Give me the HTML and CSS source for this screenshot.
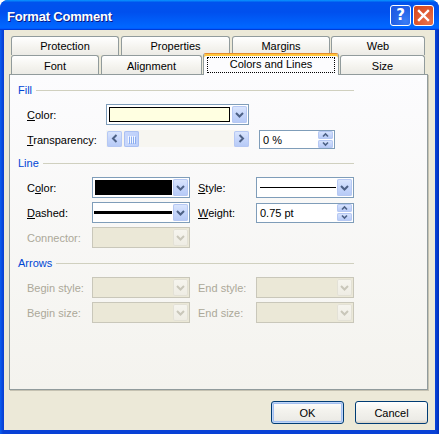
FILE: index.html
```html
<!DOCTYPE html>
<html>
<head>
<meta charset="utf-8">
<title>Format Comment</title>
<link rel="stylesheet" href="styles.css">
</head>
<body>
<div class="window">
  <div class="titlebar">
    <span class="title">Format Comment</span>
    <div class="tb-buttons">
      <div class="tb-btn help">?</div>
      <div class="tb-btn close">
        <svg width="19" height="19" viewBox="0 0 19 19"><path d="M5 5 L14 14 M14 5 L5 14" stroke="#fff" stroke-width="2.4" stroke-linecap="square" fill="none"/></svg>
      </div>
    </div>
  </div>
  <div class="client">
    <div class="tabs">
      <div class="tabrow back">
        <div class="tab t-prot">Protection</div>
        <div class="tab t-props">Properties</div>
        <div class="tab t-marg">Margins</div>
        <div class="tab t-web">Web</div>
      </div>
      <div class="tabrow front">
        <div class="tab t-font">Font</div>
        <div class="tab t-align">Alignment</div>
        <div class="tab t-colors selected"><span class="focus">Colors and Lines</span></div>
        <div class="tab t-size">Size</div>
      </div>
    </div>
    <div class="panel">
      <section class="group">
        <div class="group-head"><span class="gh-text">Fill</span><i class="rule"></i></div>
        <div class="grid grid-fill">
          <span class="lbl"><u>C</u>olor:</span>
          <div class="combo">
            <div class="field"><div class="swatch yellow"></div></div>
            <div class="dd"><svg width="15" height="17" viewBox="0 0 15 17"><path d="M4 7 L7.5 10.5 L11 7" stroke="#4d6185" stroke-width="2" fill="none"/></svg></div>
          </div>
          <span class="lbl"><u>T</u>ransparency:</span>
          <div class="hscroll">
            <div class="sbtn"><svg width="15" height="17" viewBox="0 0 15 17"><path d="M9.5 5 L6 8.5 L9.5 12" stroke="#4d6185" stroke-width="2" fill="none"/></svg></div>
            <div class="thumb"><svg width="15" height="17" viewBox="0 0 15 17"><path d="M4.5 5 V12 M6.5 5 V12 M8.5 5 V12 M10.5 5 V12" stroke="#f4f8ff" stroke-width="1" fill="none"/><path d="M5.5 6 V13 M7.5 6 V13 M9.5 6 V13 M11.5 6 V13" stroke="#8caef0" stroke-width="1" fill="none"/></svg></div>
            <div class="track"></div>
            <div class="sbtn"><svg width="15" height="17" viewBox="0 0 15 17"><path d="M5.5 5 L9 8.5 L5.5 12" stroke="#4d6185" stroke-width="2" fill="none"/></svg></div>
          </div>
          <div class="spin s-trans">
            <span class="spin-val">0 %</span>
            <div class="spinbtns">
              <div class="spb"><svg width="15" height="8" viewBox="0 0 15 8"><path d="M5 5.5 L7.5 3 L10 5.5" stroke="#4d6185" stroke-width="1.6" fill="none"/></svg></div>
              <div class="spb"><svg width="15" height="8" viewBox="0 0 15 8"><path d="M5 2.5 L7.5 5 L10 2.5" stroke="#4d6185" stroke-width="1.6" fill="none"/></svg></div>
            </div>
          </div>
        </div>
      </section>

      <section class="group g-line">
        <div class="group-head"><span class="gh-text">Line</span><i class="rule"></i></div>
        <div class="grid grid-two">
          <span class="lbl">C<u>o</u>lor:</span>
          <div class="combo">
            <div class="field"><div class="swatch black"></div></div>
            <div class="dd"><svg width="15" height="17" viewBox="0 0 15 17"><path d="M4 7 L7.5 10.5 L11 7" stroke="#4d6185" stroke-width="2" fill="none"/></svg></div>
          </div>
          <span class="lbl c4"><u>S</u>tyle:</span>
          <div class="combo">
            <div class="field"><div class="linesample thin"></div></div>
            <div class="dd"><svg width="15" height="17" viewBox="0 0 15 17"><path d="M4 7 L7.5 10.5 L11 7" stroke="#4d6185" stroke-width="2" fill="none"/></svg></div>
          </div>
          <span class="lbl"><u>D</u>ashed:</span>
          <div class="combo">
            <div class="field"><div class="linesample thick"></div></div>
            <div class="dd"><svg width="15" height="17" viewBox="0 0 15 17"><path d="M4 7 L7.5 10.5 L11 7" stroke="#4d6185" stroke-width="2" fill="none"/></svg></div>
          </div>
          <span class="lbl c4"><u>W</u>eight:</span>
          <div class="spin">
            <span class="spin-val">0.75 pt</span>
            <div class="spinbtns">
              <div class="spb"><svg width="15" height="8" viewBox="0 0 15 8"><path d="M5 5.5 L7.5 3 L10 5.5" stroke="#4d6185" stroke-width="1.6" fill="none"/></svg></div>
              <div class="spb"><svg width="15" height="8" viewBox="0 0 15 8"><path d="M5 2.5 L7.5 5 L10 2.5" stroke="#4d6185" stroke-width="1.6" fill="none"/></svg></div>
            </div>
          </div>
          <span class="lbl disabled">Connector:</span>
          <div class="combo disabled">
            <div class="field"></div>
            <div class="dd"><svg width="15" height="17" viewBox="0 0 15 17"><path d="M4 7 L7.5 10.5 L11 7" stroke="#c9c7ba" stroke-width="2" fill="none"/></svg></div>
          </div>
        </div>
      </section>

      <section class="group g-arrows">
        <div class="group-head"><span class="gh-text">Arrows</span><i class="rule"></i></div>
        <div class="grid grid-two">
          <span class="lbl disabled">Begin style:</span>
          <div class="combo disabled">
            <div class="field"></div>
            <div class="dd"><svg width="15" height="17" viewBox="0 0 15 17"><path d="M4 7 L7.5 10.5 L11 7" stroke="#c9c7ba" stroke-width="2" fill="none"/></svg></div>
          </div>
          <span class="lbl disabled c4">End style:</span>
          <div class="combo disabled">
            <div class="field"></div>
            <div class="dd"><svg width="15" height="17" viewBox="0 0 15 17"><path d="M4 7 L7.5 10.5 L11 7" stroke="#c9c7ba" stroke-width="2" fill="none"/></svg></div>
          </div>
          <span class="lbl disabled">Begin size:</span>
          <div class="combo disabled">
            <div class="field"></div>
            <div class="dd"><svg width="15" height="17" viewBox="0 0 15 17"><path d="M4 7 L7.5 10.5 L11 7" stroke="#c9c7ba" stroke-width="2" fill="none"/></svg></div>
          </div>
          <span class="lbl disabled c4">End size:</span>
          <div class="combo disabled">
            <div class="field"></div>
            <div class="dd"><svg width="15" height="17" viewBox="0 0 15 17"><path d="M4 7 L7.5 10.5 L11 7" stroke="#c9c7ba" stroke-width="2" fill="none"/></svg></div>
          </div>
        </div>
      </section>
    </div>
    <div class="buttons">
      <button class="btn default">OK</button>
      <button class="btn">Cancel</button>
    </div>
  </div>
</div>
</body>
</html>
```

FILE: styles.css
```css
* { box-sizing: border-box; }
html, body { margin: 0; padding: 0; background: #ffffff; }
body {
  font-family: "Liberation Sans", Arial, sans-serif;
  font-size: 11px;
  color: #000;
}
.window {
  width: 439px;
  height: 434px;
  display: flex;
  flex-direction: column;
  background: linear-gradient(90deg, #0a5ef0 0, #0841d6 3px, #0841d6 calc(100% - 3px), #0030b8 100%);
  border-radius: 8px 8px 0 0;
  overflow: hidden;
}
.titlebar {
  height: 30px;
  flex: none;
  display: flex;
  align-items: center;
  padding: 0 5px 0 7px;
  background: linear-gradient(180deg, #0997ff 0, #0053ee 8%, #0050ee 40%, #0066ff 88%, #0066ff 93%, #005bff 95%, #003dd7 96%, #003dd7 100%);
}
.title {
  flex: 1;
  color: #ffffff;
  font-weight: bold;
  font-size: 13px;
  letter-spacing: -0.2px;
  text-shadow: 1px 1px 0 #0a1883;
  padding-top: 2px;
}
.tb-buttons { display: flex; gap: 2px; margin-top: 1px; }
.tb-btn {
  width: 21px;
  height: 21px;
  border: 1px solid #ffffff;
  border-radius: 3px;
  display: flex;
  align-items: center;
  justify-content: center;
  color: #fff;
}
.help {
  background: radial-gradient(circle at 75% 80%, #3a7df6 0, #2563e8 50%, #1c55de 100%);
  font-family: "DejaVu Sans", sans-serif;
  font-weight: bold;
  font-size: 15px;
  line-height: 1;
}
.close {
  background: radial-gradient(circle at 80% 85%, #e8704a 0, #e05a32 50%, #d1441c 100%);
}
.client {
  flex: 1;
  margin: 0 4px 4px 4px;
  background: #ece9d8;
  padding: 6px 7px 0 5px;
  display: flex;
  flex-direction: column;
}
.tabs { margin-left: 2px; }
.tabrow { display: flex; height: 19px; align-items: flex-start; }
.tab {
  flex: none;
  height: 19px;
  border: 1px solid #919b9c;
  border-bottom: none;
  border-radius: 3px 3px 0 0;
  background: linear-gradient(180deg, #ffffff 0, #f4f3ee 60%, #ecebe6 100%);
  text-align: center;
  line-height: 17px;
  padding-top: 1px;
}
.front .tab { padding-top: 2px; }
.t-prot { width: 108px; }
.t-props { width: 109px; margin-left: 2px; }
.t-marg { width: 98px; margin-left: 2px; }
.t-web { width: 94px; margin-left: 1px; }
.t-font { width: 88px; }
.t-align { width: 101px; margin-left: 2px; }
.t-colors { width: 136px; margin-left: 1px; }
.t-size { width: 85px; margin-left: 1px; }
.tab.selected {
  height: 22px;
  margin-top: -2px;
  position: relative;
  z-index: 2;
  background: #fcfcfe;
  border-top: 1px solid #e68b2c;
  box-shadow: inset 0 2px 0 #ffc73c;
  padding: 3px 3px 0 3px;
}
.focus {
  display: block;
  height: 16px;
  border: 1px dotted #000;
  line-height: 13px;
}
.panel {
  width: 419px;
  height: 316px;
  flex: none;
  border: 1px solid #919b9c;
  box-shadow: 1px 1px 0 #c5c2b2;
  background: linear-gradient(180deg, #fcfcfe 0, #f4f3ee 100%);
  padding: 8px 0 0 8px;
}
.group-head {
  width: 336px;
  height: 14px;
  display: flex;
  align-items: center;
  margin-bottom: 7px;
}
.gh-text { color: #0046d5; }
.rule { flex: 1; height: 1px; background: #d0d0bf; margin-left: 4px; }
.g-line { margin-top: 6px; }
.g-arrows { margin-top: 8px; }
.grid {
  display: grid;
  margin-left: 9px;
  grid-auto-rows: 21px;
  row-gap: 4px;
  align-items: center;
}
.grid-fill { grid-template-columns: 79px 143px 10px 76px; }
.grid-fill .lbl { grid-column: 1; }
.grid-fill .spin { grid-column: 4; height: 19px; }
.grid-two { grid-template-columns: 65px 98px 8px 58px 98px; }
.grid-two .lbl { grid-column: 1; }
.grid-two .lbl.c4 { grid-column: 4; }
.lbl { white-space: nowrap; }
.lbl.disabled { color: #aca899; }
.combo {
  height: 21px;
  display: flex;
  border: 1px solid #7f9db9;
  background: #ffffff;
  padding: 1px;
}
.field { flex: 1; display: flex; align-items: center; }
.dd, .sbtn, .spb {
  flex: none;
  width: 15px;
  height: 17px;
  border-radius: 2px;
  background: linear-gradient(180deg, #dce7fd 0, #c6d6fb 50%, #b5c9f6 100%);
  box-shadow: inset 0 0 0 1px #b6c8f3;
  display: flex;
  align-items: center;
  justify-content: center;
}
.dd svg, .sbtn svg, .spb svg, .thumb svg { display: block; }
.swatch { flex: 1; height: 15px; margin: 0 1px; border: 1px solid #000; }
.swatch.yellow { background: #ffffe1; margin-right: 2px; }
.swatch.black { background: #000; }
.linesample { flex: 1; margin: 0 1px 0 0; background: #000; }
.linesample.thin { height: 1px; margin-left: 2px; }
.linesample.thick { height: 3px; }
.combo.disabled {
  border-color: #c9c7ba;
  background: #ebe8d7;
}
.combo.disabled .dd {
  background: linear-gradient(180deg, #f6f5ef 0, #eeece3 100%);
  box-shadow: inset 0 0 0 1px #e3e1d6;
}
.hscroll {
  height: 17px;
  display: flex;
  align-items: center;
  background: #f7f6f1;
  padding-left: 1px;
  align-self: start;
  margin-top: 1px;
}
.hscroll .sbtn { height: 16px; }
.thumb {
  flex: none;
  width: 15px;
  height: 16px;
  margin-left: 2px;
  border-radius: 2px;
  background: linear-gradient(90deg, #c9d8fc 0, #bdd0fa 100%);
  box-shadow: inset 0 0 0 1px #aac0f2;
}
.track { flex: 1; }
.spin {
  height: 20px;
  display: flex;
  align-items: center;
  border: 1px solid #7f9db9;
  background: #ffffff;
  padding: 1px 1px 1px 3px;
}
.spin-val { flex: 1; }
.spinbtns { display: flex; flex-direction: column; gap: 1px; align-self: stretch; justify-content: center; }
.spb { height: 8px; }
.buttons {
  display: flex;
  justify-content: flex-end;
  gap: 11px;
  margin-top: 11px;
}
.btn {
  width: 73px;
  height: 23px;
  border: 1px solid #003c74;
  border-radius: 3px;
  background: linear-gradient(180deg, #ffffff 0, #f4f3ee 40%, #ecebe6 86%, #d6d0c5 100%);
  font-family: "Liberation Sans", Arial, sans-serif;
  font-size: 11px;
  color: #000;
  padding: 0;
}
.btn.default {
  box-shadow: inset 0 0 0 1px #c0d6f8, inset 0 0 0 2px #a3bff0;
}
```
